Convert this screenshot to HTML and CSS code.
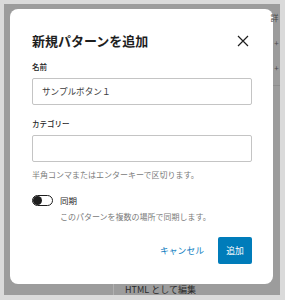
FILE: index.html
```html
<!DOCTYPE html>
<html>
<head>
    <title>新規パターンを追加</title>
    <link rel="stylesheet" href="styles.css">
</head>
<body>
    <div class="frame">
        <div class="screen">
            <div class="stage">
                <div class="modal">
                    <div class="modal-header">
                        <h1 class="modal-title">新規パターンを追加</h1>
                        <button class="close-button" title="閉じる">
                            <svg width="12" height="12" viewBox="0 0 12 12">
                                <path d="M1 1 L11 11 M11 1 L1 11" stroke="#1e1e1e" stroke-width="1.2" fill="none"/>
                            </svg>
                        </button>
                    </div>

                    <label class="field-label first">名前</label>
                    <div class="text-input">サンプルボタン１</div>

                    <label class="field-label">カテゴリー</label>
                    <div class="text-input"></div>
                    <p class="help">半角コンマまたはエンターキーで区切ります。</p>

                    <div class="toggle-row">
                        <span class="toggle"><span class="knob"></span></span>
                        <span class="toggle-label">同期</span>
                    </div>
                    <p class="toggle-help">このパターンを複数の場所で同期します。</p>

                    <div class="actions">
                        <button class="btn-link">キャンセル</button>
                        <button class="btn-primary">追加</button>
                    </div>
                </div>
                <div class="side">
                    <span class="side-glyph top">詳</span>
                    <span class="side-glyph">+</span>
                    <span class="side-glyph">+</span>
                    <span class="side-rule"></span>
                </div>
            </div>
            <div class="bottom-bar">
                <span class="bar-divider"></span>
                <span class="bar-text">HTML として編集</span>
            </div>
        </div>
    </div>
</body>
</html>
```

FILE: styles.css
```css
body {
    margin: 0;
    background-color: #dadada;
    font-family: "Noto Sans CJK JP", "Noto Sans", sans-serif;
    color: #1e1e1e;
}
.frame {
    width: 285px;
    height: 300px;
    box-sizing: border-box;
    padding: 4px 5px 5px 4px;
}
.screen {
    height: 291px;
    background-color: #9c9c9c;
    display: flex;
    flex-direction: column;
    overflow: hidden;
}
.stage {
    display: flex;
    padding: 5px 0 0 6px;
}
.modal {
    width: 263px;
    height: 275px;
    box-sizing: border-box;
    background-color: #fff;
    border-radius: 8px;
    padding: 22px 21px 20px 22px;
    display: flex;
    flex-direction: column;
    flex-shrink: 0;
}
.modal-header {
    height: 20px;
    display: flex;
    align-items: center;
    justify-content: space-between;
}
.modal-title {
    margin: 0;
    font-size: 13px;
    font-weight: 600;
    line-height: 20px;
}
.close-button {
    background: none;
    border: none;
    padding: 0;
    margin-right: 3px;
    width: 12px;
    height: 12px;
    display: flex;
}
.field-label {
    display: block;
    font-size: 7.5px;
    font-weight: 500;
    line-height: 10px;
    margin-top: 14px;
    color: #1e1e1e;
}
.field-label.first {
    margin-top: 11px;
}
.text-input {
    margin-top: 6px;
    height: 27px;
    box-sizing: border-box;
    border: 1px solid #c4c4c4;
    border-radius: 2px;
    padding: 0 9px;
    font-size: 8.6px;
    line-height: 25px;
    color: #3c3c3c;
}
.help {
    margin: 7px 0 0;
    font-size: 8px;
    line-height: 12px;
    color: #7a7a7a;
}
.toggle-row {
    margin-top: 13px;
    height: 12px;
    display: flex;
    align-items: center;
    gap: 7px;
}
.toggle {
    width: 21px;
    height: 11px;
    box-sizing: border-box;
    border: 1px solid #1e1e1e;
    border-radius: 6px;
    display: flex;
    align-items: center;
    padding-left: 0;
}
.knob {
    width: 9px;
    height: 9px;
    border-radius: 50%;
    background-color: #1e1e1e;
}
.toggle-label {
    font-size: 8.5px;
    line-height: 12px;
}
.toggle-help {
    margin: 5px 0 0 28px;
    font-size: 8px;
    line-height: 12px;
    color: #7a7a7a;
}
.actions {
    margin-top: 14px;
    display: flex;
    justify-content: flex-end;
    align-items: center;
    gap: 14px;
}
.btn-link {
    background: none;
    border: none;
    padding: 0;
    font-family: inherit;
    font-size: 8.8px;
    color: #0a7cc0;
}
.btn-primary {
    width: 34px;
    height: 27px;
    border: none;
    border-radius: 2px;
    background-color: #007cba;
    color: #fff;
    font-family: inherit;
    font-size: 8.8px;
    padding: 0;
}
.side {
    flex: 1;
    display: flex;
    flex-direction: column;
    align-items: center;
    color: #4a4a4a;
    font-size: 8px;
}
.side-glyph {
    line-height: 10px;
    margin-top: 15px;
}
.side-glyph.top {
    margin-top: 4px;
    margin-left: -4px;
}
.side-rule {
    margin-top: 12px;
    width: 100%;
    height: 1px;
    background-color: #8e8e8e;
}
.bottom-bar {
    flex: 1;
    display: flex;
    align-items: flex-start;
    padding-left: 109px;
}
.bar-divider {
    width: 1px;
    height: 11px;
    background-color: #b0b0b0;
}
.bar-text {
    margin-left: 11px;
    font-size: 9px;
    line-height: 11px;
    color: #2a2a2a;
}
```
